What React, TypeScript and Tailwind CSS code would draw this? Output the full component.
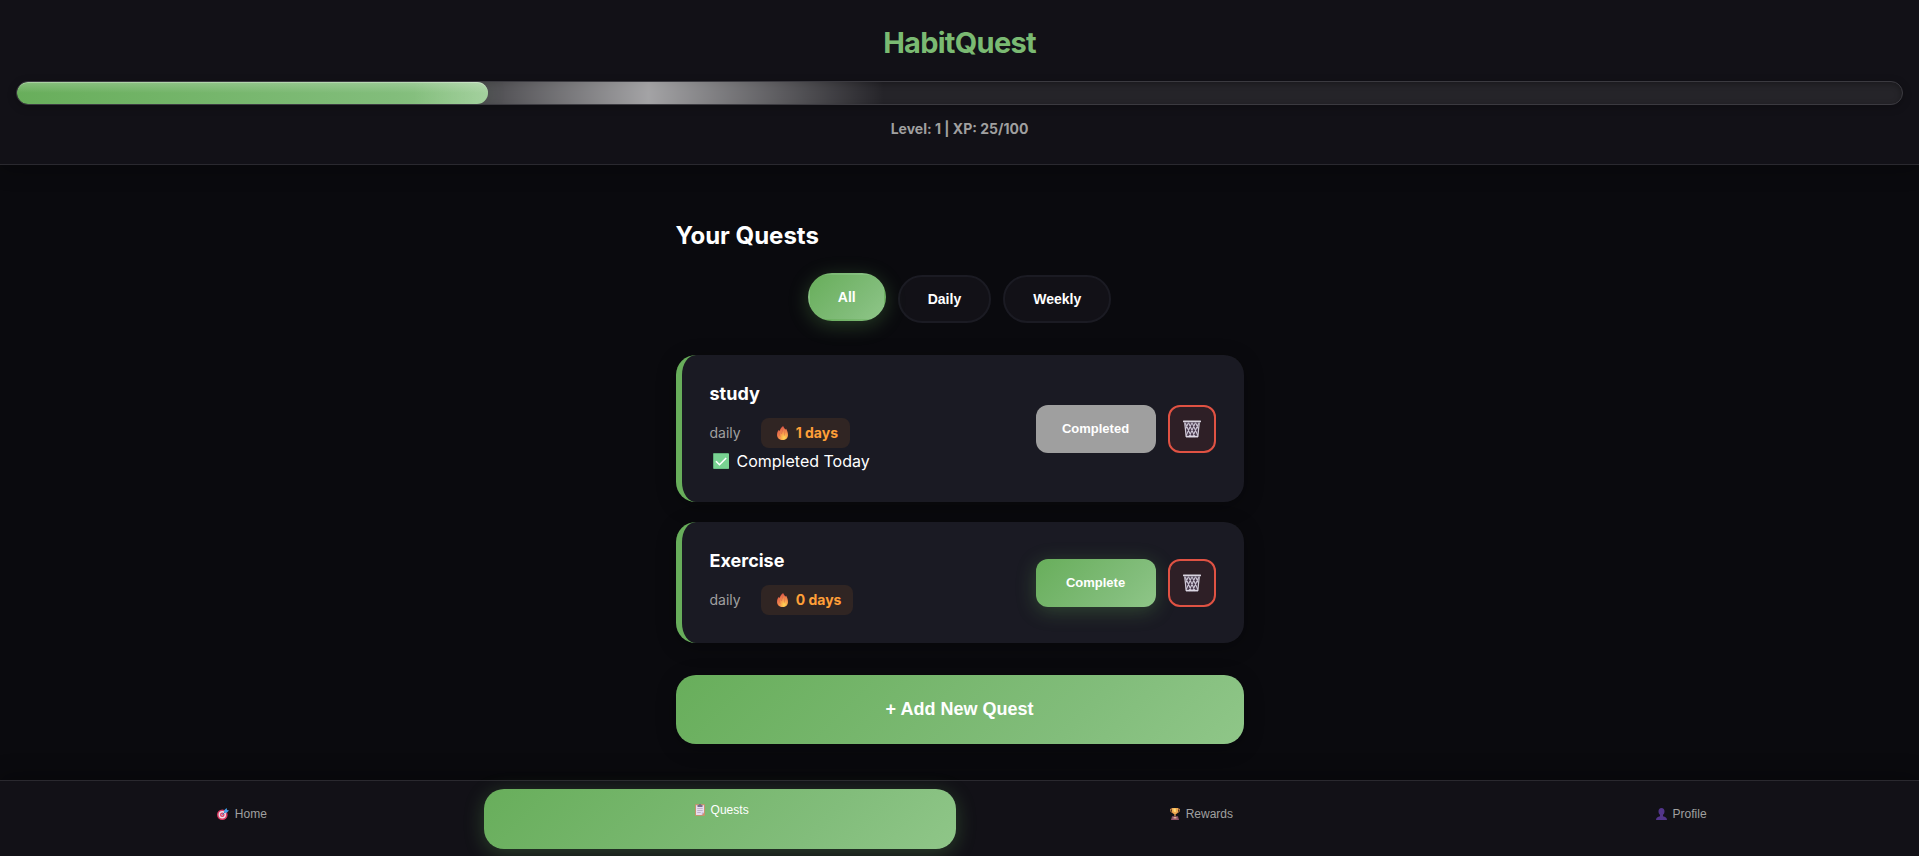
import { useState } from "react";
import type { ReactNode } from "react";

type Quest = { name: string; kind: "daily" | "weekly"; streak: number; done: boolean };

const quests: Quest[] = [
  { name: "study", kind: "daily", streak: 1, done: true },
  { name: "Exercise", kind: "daily", streak: 0, done: false },
];

const green = "bg-[linear-gradient(135deg,#68ae5b_0%,#82bd7b_70%,#8fc688_100%)]";
const buttonFont = "font-['Liberation_Sans',Arial,sans-serif]";

function FlameIcon() {
  return (
    <svg aria-hidden="true" className="h-[14px] w-[11px] shrink-0" viewBox="0 0 11 14">
      <defs>
        <radialGradient id="flame" cx="0.65" cy="0.85" r="0.8">
          <stop offset="0" stopColor="#ffd755" />
          <stop offset="0.4" stopColor="#f9a04c" />
          <stop offset="1" stopColor="#dc5748" />
        </radialGradient>
      </defs>
      <path d="M6.2 0C6.5 1.5 7.5 2.3 8.5 3.5l.7-.8C10.300 4.500 11 6.700 11 9c0 3-2.300 5-5.300 5S0 12 0 9c0-2 .5-3.500 1.500-5l.9 1C3.200 3.200 4.300 1.200 6.200 0z" fill="url(#flame)" />
      <path d="M5.500 3.500c.3 2-1.200 2.800-1 4.500M3 6.500c-.8 1.500-.6 3 .3 4M7.500 5.500c.6 1.500-.3 2.500 0 4" stroke="#c9524d" strokeWidth=".6" fill="none" opacity=".7" />
    </svg>
  );
}

function CheckIcon() {
  return (
    <svg aria-hidden="true" className="size-4 shrink-0" viewBox="0 0 16 16">
      <rect width="16" height="16" rx="1" fill="#5fae78" />
      <rect x="1" y="1" width="15" height="14.500" fill="#79d292" />
      <path d="M3 8.200l3.500 3.500L13.200 5" stroke="#fff" strokeWidth="1.600" fill="none" />
    </svg>
  );
}

function TrashIcon() {
  return (
    <svg aria-hidden="true" className="h-[18px] w-[18px]" viewBox="0 0 18 18">
      <path d="M1.500 1.500h15l-1.500 16H3z" fill="#45364a" />
      <path
        d="M2 2.500L8.500 17M5.500 2.500L12 17M9 2.500L14.800 15.500M12.500 2.500L15.500 9M16 2.500L9.500 17M12.500 2.500L6 17M9 2.500L3.200 15.500M5.500 2.500L2.500 9"
        stroke="#cbc4d4"
        strokeWidth="1.100"
      />
      <path d="M1.700 2.500L3.200 17M16.300 2.500L14.800 17" stroke="#d0cad8" strokeWidth="1.200" />
      <rect x="0" y=".5" width="18" height="1.800" rx=".5" fill="#d8d3de" />
      <path d="M1.500 2.800h15" stroke="#6f6675" strokeWidth=".7" />
      <path d="M3 16.600h12" stroke="#dcd7e2" strokeWidth="1.600" />
    </svg>
  );
}

function TargetIcon() {
  return (
    <svg aria-hidden="true" className="size-3 shrink-0" viewBox="0 0 12 12">
      <circle cx="5.300" cy="6.700" r="5.300" fill="#d93a62" />
      <circle cx="5.300" cy="6.700" r="3.700" fill="#f0dfe8" />
      <circle cx="5.300" cy="6.700" r="2.300" fill="#d93a62" />
      <circle cx="5.300" cy="6.700" r=".9" fill="#f5e8ee" />
      <path d="M5.300 6.700L9 3" stroke="#2d6fb0" strokeWidth="1" />
      <path d="M7.200 4.800V2.300L9.600 0l.4 2 2 .4-2.300 2.400z" fill="#41a1ea" />
    </svg>
  );
}

function ClipboardIcon() {
  return (
    <svg aria-hidden="true" className="h-3 w-[10px] shrink-0" viewBox="0 0 10 12">
      <rect x=".2" y=".2" width="9.600" height="11.600" rx=".6" fill="#d98a6c" />
      <path d="M1 1.200h8v7.300L6.800 11H1z" fill="#e6dcee" />
      <path d="M2.300 4.500h5.400M2.300 6.500h5.400M2.300 8.500h3.500" stroke="#b3a6c2" strokeWidth=".8" />
      <path d="M9 8.500H6.800V11z" fill="#c0aed0" />
      <path d="M2.500 1h1.300a1.200 1.200 0 012.400 0h1.300v2h-5z" fill="#77708a" />
    </svg>
  );
}

function TrophyIcon() {
  return (
    <svg aria-hidden="true" className="h-3 w-[10px] shrink-0" viewBox="0 0 10 12">
      <path d="M2 1H.6v1.500c0 1.200.9 2 2 2M8 1h1.400v1.500c0 1.200-.9 2-2 2" fill="none" stroke="#e2904a" strokeWidth=".9" />
      <path d="M1.800 0h6.400v2.800C8.200 4.800 6.800 6 5.600 6.300V8.500H4.400V6.300C3.200 6 1.800 4.800 1.800 2.800z" fill="#f0a851" />
      <path d="M3.500.5h2.300v3.600c-1 .3-2.300-.5-2.300-1.800z" fill="#ffdf7b" />
      <path d="M2 8.200h6l1 3.800H1z" fill="#8e5267" />
      <rect x="3.600" y="9.200" width="2.800" height="1.200" fill="#f2c6a0" />
    </svg>
  );
}

function ProfileIcon() {
  return (
    <svg aria-hidden="true" className="h-3 w-[11px] shrink-0" viewBox="0 0 11 12">
      <path d="M5.500 0c1.900 0 3 1.300 3 3.200 0 1.600-.6 2.900-1.500 3.600v1.400c2.300.3 4 1.500 4 3.800H0c0-2.300 1.700-3.500 4-3.800V6.800C3.100 6.100 2.500 4.800 2.500 3.200 2.500 1.300 3.600 0 5.500 0z" fill="#52358a" />
    </svg>
  );
}

function QuestCard({ quest }: { quest: Quest }) {
  return (
    <li className="flex items-center justify-between rounded-[20px] border-l-[6px] border-[#68ae5b] bg-[#1a1a23] p-7 shadow-[0_4px_20px_rgba(0,0,0,0.3)]">
      <div>
        <h3 className="mb-3.5 text-lg leading-[21px] font-bold text-white">{quest.name}</h3>
        <div className="flex items-center gap-5 text-sm">
          <span className="text-[#a0a0a0]">{quest.kind}</span>
          <span className="flex h-[30px] items-center gap-2 rounded-lg bg-[#302523] pr-3 pl-4 font-bold text-[#ff9f38]">
            <FlameIcon />
            {quest.streak} days
          </span>
        </div>
        {quest.done && (
          <p className="flex items-center gap-2 pl-[3px] text-base leading-[26px] text-white">
            <CheckIcon />
            Completed Today
          </p>
        )}
      </div>
      <div className={`flex gap-3 ${buttonFont}`}>
        {quest.done ? (
          <button disabled className="h-12 min-w-[120px] rounded-xl bg-[#9f9f9f] text-[13px] font-bold text-white">
            Completed
          </button>
        ) : (
          <button className={`h-12 min-w-[120px] rounded-xl text-[13px] font-bold text-white shadow-[0_4px_20px_rgba(104,174,91,0.3)] ${green}`}>
            Complete
          </button>
        )}
        <button
          aria-label={`Delete ${quest.name}`}
          className="flex size-12 items-center justify-center rounded-xl border-2 border-[#e05243] bg-[#2e1f26]"
        >
          <TrashIcon />
        </button>
      </div>
    </li>
  );
}

const tabs: { label: string; icon: ReactNode }[] = [
  { label: "Home", icon: <TargetIcon /> },
  { label: "Quests", icon: <ClipboardIcon /> },
  { label: "Rewards", icon: <TrophyIcon /> },
  { label: "Profile", icon: <ProfileIcon /> },
];

export default function App() {
  const [filter, setFilter] = useState("All");
  const xp = 25;
  const shown = quests.filter((q) => filter === "All" || q.kind === filter.toLowerCase());

  return (
    <div className="flex min-h-screen flex-col bg-[#0a0a0e] font-[Inter,sans-serif] text-white">
      <header className="border-b border-[#2a292f] bg-[#121117] px-4 pt-5 pb-6 text-center shadow-[0_4px_20px_rgba(0,0,0,0.3)]">
        <h1 className="mb-4 text-[29px] leading-[45px] font-bold tracking-tight text-[#7aba72]">HabitQuest</h1>
        <div
          role="progressbar"
          aria-label="Experience"
          aria-valuenow={xp}
          className="relative h-6 overflow-hidden rounded-xl border border-[#3b3a40] bg-[#252429] shadow-[inset_0_2px_6px_rgba(0,0,0,0.3),0_2px_8px_rgba(0,0,0,0.25)]"
        >
          <div
            className="relative h-full rounded-xl bg-[linear-gradient(90deg,#68ae5b,#82bd7b_80%,#8fc688)] shadow-[inset_0_1px_0_rgba(255,255,255,0.3),0_0_20px_rgba(104,174,91,0.15)]"
            style={{ width: `${xp}%` }}
          >
            <div className="absolute inset-x-0 top-0 h-1/2 rounded-t-xl bg-linear-to-b from-white/20 to-transparent" />
            <div className="absolute inset-y-0 left-[84%] w-full bg-[linear-gradient(90deg,transparent,rgba(255,255,255,0.58),transparent)]" />
          </div>
        </div>
        <p className="mt-3 text-sm leading-[23px] font-bold text-[#a0a0a0]">Level: 1 | XP: {xp}/100</p>
      </header>

      <main className="mx-auto w-full max-w-[600px] flex-1 px-4 pt-12 pb-8">
        <h2 className="mb-4 text-2xl leading-[46px] font-bold text-white">Your Quests</h2>
        <div className={`mb-8 flex justify-center gap-3 ${buttonFont}`}>
          {["All", "Daily", "Weekly"].map((name) => (
            <button
              key={name}
              aria-pressed={filter === name}
              onClick={() => setFilter(name)}
              className={`h-12 rounded-full border-2 px-7 text-sm font-bold text-white ${
                filter === name
                  ? `-translate-y-0.5 border-transparent shadow-[0_4px_20px_rgba(104,174,91,0.3)] ${green}`
                  : "border-[#1b1b23] bg-[#121117]"
              }`}
            >
              {name}
            </button>
          ))}
        </div>
        <ul className="flex flex-col gap-5">
          {shown.map((quest) => (
            <QuestCard key={quest.name} quest={quest} />
          ))}
        </ul>
        <button className={`mt-8 w-full rounded-[20px] py-5 text-lg leading-[29px] font-bold text-white shadow-[0_4px_20px_rgba(0,0,0,0.3)] ${green} ${buttonFont}`}>
          + Add New Quest
        </button>
      </main>

      <nav className={`sticky bottom-0 flex border-t border-[#2a292f] bg-[#121117] pt-3 pb-[3px] text-xs shadow-[0_-4px_20px_rgba(0,0,0,0.3)] ${buttonFont}`}>
        {tabs.map(({ label, icon }) => (
          <a
            key={label}
            href={`#${label.toLowerCase()}`}
            className={`mx-1 flex h-[60px] flex-1 items-start justify-center gap-1.5 rounded-[20px] pt-3 pl-1 leading-[18px] ${
              label === "Quests"
                ? `-translate-y-1 text-white shadow-[0_4px_20px_rgba(104,174,91,0.3)] ${green}`
                : "text-[#a0a0a0]"
            }`}
          >
            <span className="flex h-[18px] items-center">{icon}</span>
            {label}
          </a>
        ))}
      </nav>
    </div>
  );
}
